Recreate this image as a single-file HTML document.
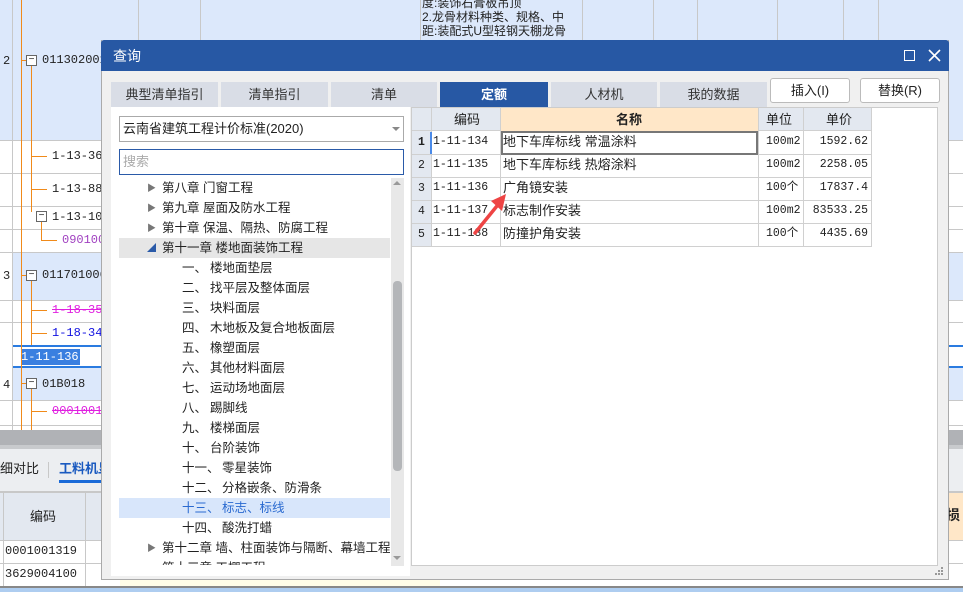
<!DOCTYPE html>
<html><head><meta charset="utf-8"><style>
*{margin:0;padding:0;box-sizing:border-box}
body{width:963px;height:592px;overflow:hidden;position:relative;background:#fff;font-family:"Liberation Sans","Noto Sans CJK SC",sans-serif;font-size:12px;color:#222}
.a{position:absolute}
.hl{position:absolute;height:1px;background:#c8c8c8}
.vl{position:absolute;width:1px;background:#c8c8c8}
.ol{position:absolute;background:#f08a1a}
.t{position:absolute;white-space:nowrap;line-height:16px}
.mono{font-family:"Liberation Mono","Noto Sans CJK SC",monospace}
.tab{position:absolute;top:82px;height:25px;background:#d9dde6;text-align:center;line-height:25px;font-size:13px;color:#333}
.tr{position:absolute;white-space:nowrap;font-size:12.5px;line-height:20px}
.tri{position:absolute;left:28px;font-size:9px;color:#777;line-height:20px}
.n{position:absolute;left:63px;white-space:nowrap;font-size:12.5px;line-height:20px}
</style></head><body>
<div class="a" style="left:0;top:0;width:963px;height:140px;background:#dce8fb"></div>
<div class="a" style="left:12px;top:252px;width:951px;height:48px;background:#dce8fb"></div>
<div class="a" style="left:12px;top:368px;width:951px;height:32px;background:#dce8fb"></div>
<div class="a" style="left:12px;top:345px;width:951px;height:23px;background:#fff;border-top:2px solid #2a7be0;border-bottom:2px solid #2a7be0"></div>
<div class="a mono" style="left:21px;top:349px;height:16px;padding-right:1px;background:#3a7fe0;color:#fff;line-height:16px;font-size:12px;white-space:nowrap">1-11-136</div>
<div class="vl" style="left:12px;top:0;height:430px"></div>
<div class="hl" style="left:0;top:140px;width:963px"></div>
<div class="hl" style="left:0;top:173px;width:963px"></div>
<div class="hl" style="left:0;top:206px;width:963px"></div>
<div class="hl" style="left:0;top:229px;width:963px"></div>
<div class="hl" style="left:0;top:252px;width:963px"></div>
<div class="hl" style="left:0;top:300px;width:963px"></div>
<div class="hl" style="left:0;top:322px;width:963px"></div>
<div class="hl" style="left:0;top:400px;width:963px"></div>
<div class="hl" style="left:0;top:425px;width:963px"></div>
<div class="vl" style="left:138px;top:0;height:40px"></div>
<div class="vl" style="left:200px;top:0;height:40px"></div>
<div class="vl" style="left:420px;top:0;height:40px"></div>
<div class="vl" style="left:582px;top:0;height:40px"></div>
<div class="vl" style="left:653px;top:0;height:40px"></div>
<div class="vl" style="left:697px;top:0;height:40px"></div>
<div class="vl" style="left:777px;top:0;height:40px"></div>
<div class="vl" style="left:843px;top:0;height:40px"></div>
<div class="vl" style="left:878px;top:0;height:40px"></div>
<div class="t" style="left:422px;top:-4px;font-size:12px;line-height:14px">度:装饰石膏板吊顶<br>2.龙骨材料种类、规格、中<br>距:装配式U型轻钢天棚龙骨</div>
<div class="ol" style="left:21px;top:0;width:1px;height:430px"></div>
<div class="ol" style="left:31px;top:66px;width:1px;height:146px"></div>
<div class="ol" style="left:41px;top:222px;width:1px;height:18px"></div>
<div class="ol" style="left:31px;top:281px;width:1px;height:64px"></div>
<div class="ol" style="left:31px;top:389px;width:1px;height:41px"></div>
<div class="ol" style="left:21px;top:60px;width:5px;height:1px"></div>
<div class="ol" style="left:21px;top:275px;width:5px;height:1px"></div>
<div class="ol" style="left:21px;top:383px;width:5px;height:1px"></div>
<div class="ol" style="left:31px;top:156px;width:16px;height:1px"></div>
<div class="ol" style="left:31px;top:189px;width:16px;height:1px"></div>
<div class="ol" style="left:41px;top:240px;width:16px;height:1px"></div>
<div class="ol" style="left:31px;top:310px;width:16px;height:1px"></div>
<div class="ol" style="left:31px;top:333px;width:16px;height:1px"></div>
<div class="ol" style="left:31px;top:411px;width:16px;height:1px"></div>
<div class="a" style="left:26px;top:55px;width:11px;height:11px;border:1px solid #666;background:#fff;font-size:10px;line-height:8px;text-align:center">−</div>
<div class="a" style="left:36px;top:211px;width:11px;height:11px;border:1px solid #666;background:#fff;font-size:10px;line-height:8px;text-align:center">−</div>
<div class="a" style="left:26px;top:270px;width:11px;height:11px;border:1px solid #666;background:#fff;font-size:10px;line-height:8px;text-align:center">−</div>
<div class="a" style="left:26px;top:378px;width:11px;height:11px;border:1px solid #666;background:#fff;font-size:10px;line-height:8px;text-align:center">−</div>
<div class="t mono" style="left:3px;top:53px">2</div>
<div class="t mono" style="left:3px;top:268px">3</div>
<div class="t mono" style="left:3px;top:377px">4</div>
<div class="t mono" style="left:42px;top:52px">01130200101</div>
<div class="t mono" style="left:52px;top:148px">1-13-36</div>
<div class="t mono" style="left:52px;top:181px">1-13-88</div>
<div class="t mono" style="left:52px;top:209px">1-13-109</div>
<div class="t mono" style="left:62px;top:232px;color:#a040c0">09010013</div>
<div class="t mono" style="left:42px;top:267px">01170100601</div>
<div class="t mono" style="left:52px;top:302px;color:#e020e0;text-decoration:line-through">1-18-35</div>
<div class="t mono" style="left:52px;top:325px;color:#1010e0">1-18-34</div>
<div class="t mono" style="left:42px;top:376px">01B018</div>
<div class="t mono" style="left:52px;top:403px;color:#e020e0;text-decoration:line-through">00010013</div>
<div class="a" style="left:0;top:430px;width:963px;height:15px;background:#b0b2b6"></div>
<div class="a" style="left:0;top:445px;width:963px;height:4px;background:#c8cacd"></div>
<div class="a" style="left:0;top:449px;width:963px;height:42px;background:#eceef1"></div>
<div class="t" style="left:0;top:461px;font-size:13px">细对比</div>
<div class="vl" style="left:48px;top:462px;height:16px"></div>
<div class="t" style="left:59px;top:461px;font-size:13px;color:#1a5ac0;font-weight:bold">工料机显示</div>
<div class="a" style="left:59px;top:480px;width:45px;height:3px;background:#1a6ad8"></div>
<div class="a" style="left:0;top:491px;width:963px;height:50px;background:#e3e8f0;border-top:2px solid #c8c8c8"></div>
<div class="a" style="left:944px;top:493px;width:19px;height:47px;background:#ffe7c8"></div>
<div class="t" style="left:946px;top:507px;font-size:14px;font-weight:bold">损</div>
<div class="t" style="left:30px;top:509px;font-size:13px">编码</div>
<div class="vl" style="left:3px;top:491px;height:101px"></div>
<div class="vl" style="left:85px;top:491px;height:101px"></div>
<div class="hl" style="left:0;top:540px;width:963px"></div>
<div class="hl" style="left:0;top:563px;width:963px"></div>
<div class="t mono" style="left:5px;top:543px">0001001319</div>
<div class="t mono" style="left:5px;top:566px">3629004100</div>
<div class="a" style="left:120px;top:579px;width:320px;height:7px;background:#fffde8"></div>
<div class="a" style="left:0;top:586px;width:963px;height:6px;background:#aecdf0;border-top:2px solid #888"></div>
<div class="a" style="left:101px;top:40px;width:848px;height:540px;background:#f0f0f0;border:1px solid #aaa;border-top:none"></div>
<div class="a" style="left:101px;top:40px;width:848px;height:31px;background:#2758a4;border-radius:3px 3px 0 0"></div>
<div class="t" style="left:113px;top:48px;color:#fff;font-size:14px">查询</div>
<div class="a" style="left:904px;top:50px;width:11px;height:11px;border:1.5px solid #fff"></div>
<svg class="a" style="left:928px;top:49px" width="13" height="13"><path d="M1 1L12 12M12 1L1 12" stroke="#fff" stroke-width="1.6"/></svg>
<div class="tab" style="left:111px;width:107px">典型清单指引</div>
<div class="tab" style="left:221px;width:107px">清单指引</div>
<div class="tab" style="left:331px;width:106px">清单</div>
<div class="tab" style="left:440px;width:108px;background:#2758a4;color:#fff;font-weight:bold">定额</div>
<div class="tab" style="left:551px;width:106px">人材机</div>
<div class="tab" style="left:660px;width:107px">我的数据</div>
<div class="a" style="left:770px;top:78px;width:80px;height:25px;background:#fff;border:1px solid #bbb;border-radius:3px;text-align:center;line-height:23px;font-size:13px">插入(I)</div>
<div class="a" style="left:860px;top:78px;width:80px;height:25px;background:#fff;border:1px solid #bbb;border-radius:3px;text-align:center;line-height:23px;font-size:13px">替换(R)</div>
<div class="a" style="left:111px;top:107px;width:299px;height:469px;background:#fff"></div>
<div class="a" style="left:119px;top:116px;width:285px;height:26px;border:1px solid #aaa;background:#fff;line-height:24px;padding-left:3px;font-size:13px">云南省建筑工程计价标准(2020)</div>
<div class="a" style="left:392px;top:127px;width:0;height:0;border-left:4px solid transparent;border-right:4px solid transparent;border-top:4px solid #888"></div>
<div class="a" style="left:119px;top:149px;width:285px;height:26px;border:1px solid #2a5aa8;background:#fff;line-height:24px;padding-left:3px;font-size:13px;color:#aaa">搜索</div>
<div class="a" style="left:391px;top:178px;width:13px;height:388px;background:#e8e8e8"></div>
<div class="a" style="left:393px;top:281px;width:9px;height:190px;background:#b4b6b9;border-radius:4px"></div>
<div class="a" style="left:393px;top:181px;width:0;height:0;border-left:4px solid transparent;border-right:4px solid transparent;border-bottom:4px solid #999"></div>
<div class="a" style="left:393px;top:556px;width:0;height:0;border-left:4px solid transparent;border-right:4px solid transparent;border-top:4px solid #999"></div>
<div class="a" style="left:119px;top:238px;width:271px;height:20px;background:#e6e6e6"></div>
<div class="a" style="left:119px;top:498px;width:271px;height:20px;background:#d8e6fb"></div>
<div class="a" style="left:119px;top:178px;width:271px;height:387px;overflow:hidden">
<span class="tri" style="top:0">▶</span><div class="tr" style="top:0;left:43px">第八章 门窗工程</div>
<span class="tri" style="top:20px">▶</span><div class="tr" style="top:20px;left:43px">第九章 屋面及防水工程</div>
<span class="tri" style="top:40px">▶</span><div class="tr" style="top:40px;left:43px">第十章 保温、隔热、防腐工程</div>
<span class="tri" style="top:60px;color:#2a5aa8">◢</span><div class="tr" style="top:60px;left:43px">第十一章 楼地面装饰工程</div>
<div class="n" style="top:80px">一、</div><div class="tr" style="top:80px;left:91px">楼地面垫层</div>
<div class="n" style="top:100px">二、</div><div class="tr" style="top:100px;left:91px">找平层及整体面层</div>
<div class="n" style="top:120px">三、</div><div class="tr" style="top:120px;left:91px">块料面层</div>
<div class="n" style="top:140px">四、</div><div class="tr" style="top:140px;left:91px">木地板及复合地板面层</div>
<div class="n" style="top:160px">五、</div><div class="tr" style="top:160px;left:91px">橡塑面层</div>
<div class="n" style="top:180px">六、</div><div class="tr" style="top:180px;left:91px">其他材料面层</div>
<div class="n" style="top:200px">七、</div><div class="tr" style="top:200px;left:91px">运动场地面层</div>
<div class="n" style="top:220px">八、</div><div class="tr" style="top:220px;left:91px">踢脚线</div>
<div class="n" style="top:240px">九、</div><div class="tr" style="top:240px;left:91px">楼梯面层</div>
<div class="n" style="top:260px">十、</div><div class="tr" style="top:260px;left:91px">台阶装饰</div>
<div class="n" style="top:280px">十一、</div><div class="tr" style="top:280px;left:103px">零星装饰</div>
<div class="n" style="top:300px">十二、</div><div class="tr" style="top:300px;left:103px">分格嵌条、防滑条</div>
<div class="n" style="top:320px;color:#2a6ad0">十三、</div><div class="tr" style="top:320px;left:103px;color:#2a6ad0">标志、标线</div>
<div class="n" style="top:340px">十四、</div><div class="tr" style="top:340px;left:103px">酸洗打蜡</div>
<span class="tri" style="top:360px">▶</span><div class="tr" style="top:360px;left:43px">第十二章 墙、柱面装饰与隔断、幕墙工程</div>
<div class="tr" style="top:380px;left:43px">第十三章 天棚工程</div>
</div>
<div class="a" style="left:411px;top:107px;width:527px;height:459px;background:#fff;border:1px solid #ccc"></div>
<div class="a" style="left:412px;top:108px;width:460px;height:23px;background:#e3e8f0;border-bottom:1px solid #d0d0d0"></div>
<div class="a" style="left:501px;top:108px;width:258px;height:23px;background:#ffe7c8"></div>
<div class="t" style="left:454px;top:112px;font-size:13px">编码</div>
<div class="t" style="left:616px;top:112px;font-size:13px;font-weight:bold">名称</div>
<div class="t" style="left:766px;top:112px;font-size:13px">单位</div>
<div class="t" style="left:806px;top:112px;width:66px;text-align:center;font-size:13px">单价</div>
<div class="vl" style="left:431px;top:108px;height:138px;background:#d0d0d0"></div>
<div class="vl" style="left:500px;top:108px;height:138px;background:#d0d0d0"></div>
<div class="vl" style="left:758px;top:108px;height:138px;background:#d0d0d0"></div>
<div class="vl" style="left:803px;top:108px;height:138px;background:#d0d0d0"></div>
<div class="vl" style="left:871px;top:108px;height:138px;background:#d0d0d0"></div>
<div class="a" style="left:412px;top:131px;width:19px;height:115px;background:#e3e8f0"></div>
<div class="hl" style="left:412px;top:154px;width:460px;background:#d0d0d0"></div>
<div class="hl" style="left:412px;top:177px;width:460px;background:#d0d0d0"></div>
<div class="hl" style="left:412px;top:200px;width:460px;background:#d0d0d0"></div>
<div class="hl" style="left:412px;top:223px;width:460px;background:#d0d0d0"></div>
<div class="hl" style="left:412px;top:246px;width:460px;background:#d0d0d0"></div>
<div class="a" style="left:430px;top:132px;width:2px;height:22px;background:#4a8ae8"></div>
<div class="a" style="left:501px;top:131px;width:257px;height:24px;border:2px solid #777"></div>
<div class="a mono" style="left:412px;top:131px;width:460px;font-size:11.5px">
<div class="t" style="top:4px;left:6px;font-weight:bold">1</div><div class="t" style="top:27px;left:6px">2</div><div class="t" style="top:50px;left:6px">3</div><div class="t" style="top:73px;left:6px">4</div><div class="t" style="top:96px;left:6px">5</div>
<div class="t" style="top:3px;left:21px">1-11-134</div><div class="t" style="top:26px;left:21px">1-11-135</div><div class="t" style="top:49px;left:21px">1-11-136</div><div class="t" style="top:72px;left:21px">1-11-137</div><div class="t" style="top:95px;left:21px">1-11-138</div>
<div class="t" style="top:3px;left:354px">100m2</div><div class="t" style="top:26px;left:354px">100m2</div><div class="t" style="top:49px;left:354px">100个</div><div class="t" style="top:72px;left:354px">100m2</div><div class="t" style="top:95px;left:354px">100个</div>
<div class="t" style="top:3px;right:4px">1592.62</div><div class="t" style="top:26px;right:4px">2258.05</div><div class="t" style="top:49px;right:4px">17837.4</div><div class="t" style="top:72px;right:4px">83533.25</div><div class="t" style="top:95px;right:4px">4435.69</div>
</div>
<div class="a" style="left:503px;top:131px;font-size:13px">
<div class="t" style="top:3px">地下车库标线 常温涂料</div><div class="t" style="top:26px">地下车库标线 热熔涂料</div><div class="t" style="top:49px">广角镜安装</div><div class="t" style="top:72px">标志制作安装</div><div class="t" style="top:95px">防撞护角安装</div>
</div>
<svg class="a" style="left:465px;top:185px" width="50" height="55"><path d="M10 48L36 16" stroke="#ee4444" stroke-width="3.5" stroke-linecap="round"/><path d="M41 9L26 16L37 26Z" fill="#ee4444"/></svg>
<svg class="a" style="left:935px;top:567px" width="10" height="10"><g fill="#999"><rect x="6" y="0" width="2" height="2"/><rect x="3" y="3" width="2" height="2"/><rect x="6" y="3" width="2" height="2"/><rect x="0" y="6" width="2" height="2"/><rect x="3" y="6" width="2" height="2"/><rect x="6" y="6" width="2" height="2"/></g></svg>
</body></html>
